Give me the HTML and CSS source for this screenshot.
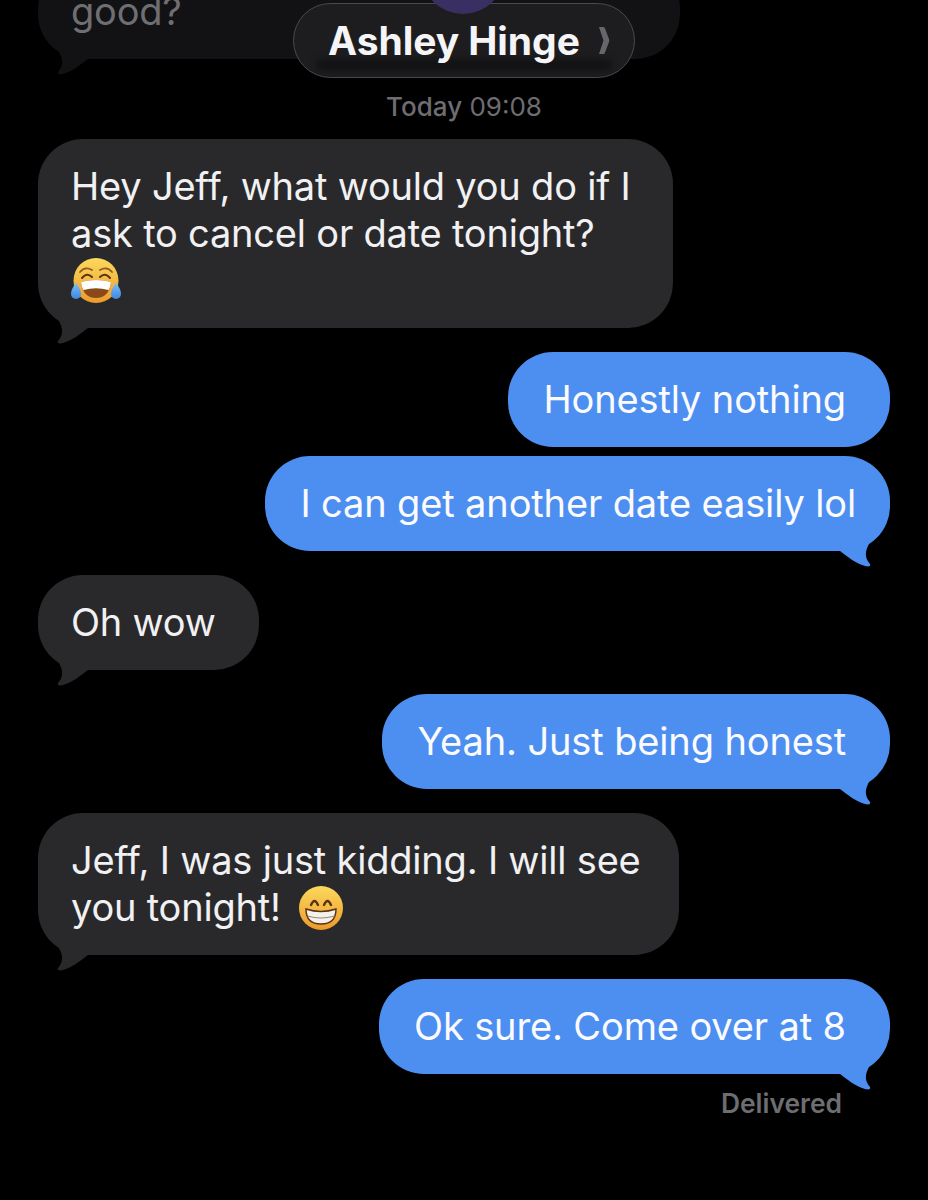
FILE: index.html
```html
<!DOCTYPE html>
<html lang="en">
<head>
<meta charset="utf-8">
<title>Messages</title>
<link rel="stylesheet" href="styles.css">
</head>
<body>
<main class="stage">
  <div class="pill">
    <span class="avatar"></span>
    <span class="pill-band"></span>
    <span class="pill-name">Ashley Hinge</span>
    <svg class="pill-chevron" viewBox="0 0 12 29"><path d="M1 1 L5.5 1 Q6.5 1 7 2.5 L11 13 Q11.5 14.5 11 16 L7 26.5 Q6.5 28 5.5 28 L1 28 L5.5 14.5 Z" fill="#67676b"/></svg>
  </div>

  <section class="thread">
    <div class="bubble in faded first">good?
      <svg class="tail" viewBox="0 -16 60 34"><path d="M15 -15 L20 -9 C25 0 26 6 20 13 C19 15 21 16 25 15 C35 12 42 6 50 0 L50 -15 Z" fill="currentColor"/></svg>
    </div>
    <div class="stamp"><b>Today</b> 09:08</div>

    <div class="bubble in w1">Hey Jeff, what would you do if I<br>ask to cancel or date tonight?
      <svg class="emoji" viewBox="0 0 50 46">
        <defs>
          <linearGradient id="face" x1="0" y1="0" x2="0" y2="1"><stop offset="0" stop-color="#fcd95c"/><stop offset="1" stop-color="#ec9a2c"/></linearGradient>
          <linearGradient id="tear" x1="0" y1="0" x2="0" y2="1"><stop offset="0" stop-color="#7cc0f5"/><stop offset="1" stop-color="#3f86e0"/></linearGradient>
        </defs>
        <circle cx="25" cy="22.5" r="22.5" fill="url(#face)"/>
        <path d="M10 24 Q25 20 40 24 Q38 40 25 40 Q12 40 10 24Z" fill="#8a4a18"/>
        <path d="M10 24 Q25 20 40 24 Q39.5 29 37.5 32 Q25 28.5 12.5 32 Q10.5 29 10 24Z" fill="#fff"/>
        <path d="M9 14 Q14 8 21 12 M29 12 Q36 8 41 14" fill="none" stroke="#8a5a20" stroke-width="1.8" stroke-linecap="round"/>
        <path d="M11 20 Q16 14 21 19 M29 19 Q34 14 39 20" fill="none" stroke="#5a3312" stroke-width="2" stroke-linecap="round"/>
        <path d="M5 25 C8 29 10 32 10 36 A5 5 0 0 1 0 36 C0 32 2 29 5 25Z" fill="url(#tear)"/>
        <path d="M45 25 C48 29 50 32 50 36 A5 5 0 0 1 40 36 C40 32 42 29 45 25Z" fill="url(#tear)"/>
      </svg>
      <svg class="tail" viewBox="0 -16 60 34"><path d="M15 -15 L20 -9 C25 0 26 6 20 13 C19 15 21 16 25 15 C35 12 42 6 50 0 L50 -15 Z" fill="currentColor"/></svg>
    </div>

    <div class="bubble out gap-sm">Honestly nothing</div>
    <div class="bubble out gap-xs tight">I can get another date easily lol
      <svg class="tail" viewBox="0 -16 60 34"><path d="M15 -15 L20 -9 C25 0 26 6 20 13 C19 15 21 16 25 15 C35 12 42 6 50 0 L50 -15 Z" fill="currentColor"/></svg>
    </div>

    <div class="bubble in">Oh wow
      <svg class="tail" viewBox="0 -16 60 34"><path d="M15 -15 L20 -9 C25 0 26 6 20 13 C19 15 21 16 25 15 C35 12 42 6 50 0 L50 -15 Z" fill="currentColor"/></svg>
    </div>

    <div class="bubble out">Yeah. Just being honest
      <svg class="tail" viewBox="0 -16 60 34"><path d="M15 -15 L20 -9 C25 0 26 6 20 13 C19 15 21 16 25 15 C35 12 42 6 50 0 L50 -15 Z" fill="currentColor"/></svg>
    </div>

    <div class="bubble in snug">Jeff, I was just kidding. I will see<br>you tonight!
      <svg class="emoji-inline" viewBox="0 0 44 44">
        <defs><linearGradient id="face2" x1="0" y1="0" x2="0" y2="1"><stop offset="0" stop-color="#fcd95c"/><stop offset="1" stop-color="#ec9a2c"/></linearGradient></defs>
        <circle cx="22" cy="22" r="22" fill="url(#face2)"/>
        <path d="M12 19 Q15.5 11 19 19 M25 19 Q28.5 11 32 19" fill="none" stroke="#5a3312" stroke-width="2.4" stroke-linecap="round"/>
        <path d="M7 23 Q22 28 37 23 Q37 38 22 38 Q7 38 7 23Z" fill="#f4f1ec" stroke="#5a3312" stroke-width="1.4"/>
        <path d="M8.5 30 Q22 34 35.5 30" fill="none" stroke="#9a8a78" stroke-width="1.2"/>
      </svg>
      <svg class="tail" viewBox="0 -16 60 34"><path d="M15 -15 L20 -9 C25 0 26 6 20 13 C19 15 21 16 25 15 C35 12 42 6 50 0 L50 -15 Z" fill="currentColor"/></svg>
    </div>

    <div class="bubble out">Ok sure. Come over at 8
      <svg class="tail" viewBox="0 -16 60 34"><path d="M15 -15 L20 -9 C25 0 26 6 20 13 C19 15 21 16 25 15 C35 12 42 6 50 0 L50 -15 Z" fill="currentColor"/></svg>
    </div>
    <div class="delivered">Delivered</div>
  </section>
</main>
</body>
</html>
```
FILE: styles.css
```css
* { box-sizing: border-box; }
html, body { margin: 0; background: #000; }
.stage {
  position: relative;
  width: 928px;
  height: 1200px;
  overflow: hidden;
  background: #000;
  font-family: Inter, "Liberation Sans", sans-serif;
}
.thread {
  display: flex;
  flex-direction: column;
  padding: 0 38px;
}
.bubble {
  position: relative;
  margin-top: 24px;
  border-radius: 45px;
  font-size: 38px;
  line-height: 47px;
  letter-spacing: -0.2px;
  white-space: nowrap;
}
.in { align-self: flex-start; padding: 24px 43px 24px 33px; background: #29292c; color: #f1f1f3; }
.out { align-self: flex-end; padding: 24px 44px 24px 35px; letter-spacing: -0.13px; background: #4c8ff0; color: #fbfbff; }
.gap-sm { margin-top: 24px; }
.gap-xs { margin-top: 9px; }
.tight { padding-right: 34px; }
.snug { padding-right: 38px; }
.first {
  margin-top: -36px;
  width: 642px;
  color: #6f6f73;
  background: #121214;
}
.w1 { margin-top: 22px; width: 635px; }
.tail {
  position: absolute;
  left: 0;
  bottom: -18px;
  width: 60px;
  height: 34px;
}
.in .tail { color: #29292c; }
.first .tail { color: #121214; }
.out .tail { left: auto; right: 0; color: #4c8ff0; transform: scaleX(-1); }
.stamp {
  margin-top: 38px;
  text-align: center;
  font-size: 26px;
  line-height: 20px;
  color: #6d6d72;
}
.stamp b { font-weight: 500; }
.emoji { display: block; width: 50px; height: 46px; margin-top: 1px; }
.emoji-inline { display: inline-block; width: 44px; height: 44px; margin-left: 8px; vertical-align: -9px; }
.delivered {
  align-self: flex-end;
  margin: 16px 48px 0 0;
  font-size: 26.4px;
  line-height: 26px;
  font-weight: 600;
  color: #6d6d72;
}
.pill {
  position: absolute;
  z-index: 2;
  left: 293px;
  top: 3px;
  width: 342px;
  height: 75px;
  display: flex;
  align-items: center;
  padding: 0 24px 0 34px;
  gap: 18px;
  border: 1.5px solid #4a4a4d;
  border-radius: 38px;
  background: #1d1d1f;
}
.avatar {
  position: absolute;
  left: 127px;
  top: -74px;
  width: 84px;
  height: 84px;
  border-radius: 50%;
  background: #3a2f63;
}
.pill-name {
  position: relative;
  font-size: 39px;
  font-weight: 700;
  letter-spacing: -0.05px;
  color: #f5f5f7;
  white-space: nowrap;
}
.pill-chevron { width: 12px; height: 29px; flex: none; position: relative; }
.pill-band {
  position: absolute;
  left: 22px;
  right: 22px;
  bottom: 6px;
  height: 12px;
  border-radius: 6px;
  background: #131315;
  filter: blur(3px);
}
```
